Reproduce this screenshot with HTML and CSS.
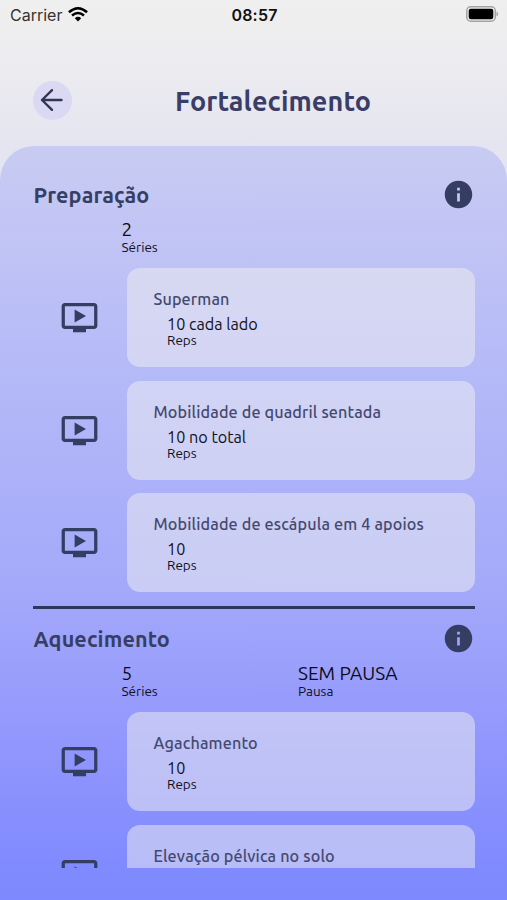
FILE: index.html
```
<!DOCTYPE html>
<html lang="pt-BR">
<head>
  <meta charset="UTF-8" />
  <meta name="viewport" content="width=device-width, initial-scale=1.0" />
  <title>Fortalecimento</title>
  <link rel="stylesheet" href="styles.css">
</head>
<body>
  <svg class="symbols">
    <symbol id="video" viewBox="0 0 24 24">
      <path d="M21 3H3c-1.11 0-2 .89-2 2v12c0 1.1.89 2 2 2h5v2h8v-2h5c1.1 0 2-.9 2-2V5c0-1.11-.9-2-2-2zm0 14H3V5h18v12zm-5-6l-7 4V7z"/>
    </symbol>
    <symbol id="info" viewBox="0 0 24 24">
      <path d="M12 2C6.48 2 2 6.48 2 12s4.48 10 10 10 10-4.48 10-10S17.52 2 12 2zm1 15h-2v-6h2v6zm0-8h-2V7h2v2z"/>
    </symbol>
  </svg>

  <div class="status">
    <div class="carrier">
      <span>Carrier</span>
      <svg class="wifi" viewBox="0 0 20 15">
        <path d="M.9 5.3Q10-2.700 19.100 5.300M4 8.500Q10 3.400 16 8.500" fill="none" stroke="#000" stroke-width="2.500"/>
        <path d="M6.800 11.200Q10 8.400 13.200 11.200L10 14.500z"/>
      </svg>
    </div>
    <div class="clock">08:57</div>
    <svg class="battery" viewBox="0 0 33 16">
      <rect x=".75" y=".75" width="28.500" height="14.500" rx="4" fill="none" stroke="#a3a3a3" stroke-width="1.500"/>
      <rect x="2.700" y="2.700" width="24.600" height="10.600" rx="2.200"/>
      <path d="M30.500 5.500c2.200.8 2.200 4.200 0 5z" fill="#a3a3a3"/>
    </svg>
  </div>

  <div class="header">
    <button class="back" aria-label="Voltar">
      <svg viewBox="0 0 24 24"><path d="M21.500 12H2M12 2.200L2 12l10 9.800"/></svg>
    </button>
    <h1>Fortalecimento</h1>
  </div>

  <div class="panel">
    <div class="scroll">
      <section class="block">
        <div class="block-title">
          <h2>Preparação</h2>
          <svg class="info"><use href="#info"/></svg>
        </div>
        <div class="stats">
          <div><p class="value">2</p><p class="label">Séries</p></div>
        </div>
        <div class="exercise">
          <svg class="video"><use href="#video"/></svg>
          <div class="card">
            <h3>Superman</h3>
            <p class="reps">10 cada lado</p>
            <p class="label">Reps</p>
          </div>
        </div>
        <div class="exercise">
          <svg class="video"><use href="#video"/></svg>
          <div class="card">
            <h3>Mobilidade de quadril sentada</h3>
            <p class="reps">10 no total</p>
            <p class="label">Reps</p>
          </div>
        </div>
        <div class="exercise">
          <svg class="video"><use href="#video"/></svg>
          <div class="card">
            <h3>Mobilidade de escápula em 4 apoios</h3>
            <p class="reps">10</p>
            <p class="label">Reps</p>
          </div>
        </div>
      </section>

      <section class="block">
        <div class="block-title">
          <h2>Aquecimento</h2>
          <svg class="info"><use href="#info"/></svg>
        </div>
        <div class="stats">
          <div><p class="value">5</p><p class="label">Séries</p></div>
          <div><p class="value">SEM PAUSA</p><p class="label">Pausa</p></div>
        </div>
        <div class="exercise">
          <svg class="video"><use href="#video"/></svg>
          <div class="card">
            <h3>Agachamento</h3>
            <p class="reps">10</p>
            <p class="label">Reps</p>
          </div>
        </div>
        <div class="exercise">
          <svg class="video"><use href="#video"/></svg>
          <div class="card">
            <h3>Elevação pélvica no solo</h3>
          </div>
        </div>
      </section>
    </div>
  </div>
</body>
</html>
```
FILE: styles.css
```
* {
  box-sizing: border-box;
}
body {
  margin: 0;
  height: 900px;
  overflow: hidden;
  display: flex;
  flex-direction: column;
  font-family: "Ubuntu", "Noto Sans", sans-serif;
  color: #10101c;
  background: linear-gradient(#efefef 0, #efeeef 30px, #e5e5f1 146px);
}
h1, h2, h3, p {
  margin: 0;
  white-space: nowrap;
}
.symbols {
  display: none;
}
.status {
  height: 30px;
  flex: none;
  display: grid;
  grid-template-columns: 1fr auto 1fr;
  align-items: center;
  padding: 0 8px 0 10px;
  font-family: Inter, sans-serif;
  font-size: 16px;
}
.carrier {
  display: flex;
  align-items: center;
  gap: 6px;
  color: #333;
}
.wifi {
  width: 20px;
  height: 15px;
  margin-bottom: 2px;
}
.clock {
  font-weight: 600;
  letter-spacing: 0.2px;
  color: #111;
}
.battery {
  width: 33px;
  height: 16px;
  justify-self: end;
  margin-bottom: 2px;
}
.header {
  height: 116px;
  flex: none;
  display: flex;
  align-items: center;
  padding: 24px 33px 0;
}
.back {
  width: 39px;
  height: 39px;
  flex: none;
  padding: 0;
  border: 0;
  border-radius: 50%;
  background: #dbd8f3;
  display: flex;
  align-items: center;
  justify-content: center;
}
.back svg {
  width: 24px;
  height: 24px;
  margin: 0 1px 1px 0;
  fill: none;
  stroke: #323655;
  stroke-width: 2.4;
  stroke-linecap: round;
  stroke-linejoin: round;
}
h1 {
  flex: 1;
  padding-top: 1px;
  text-align: center;
  font-size: 27px;
  line-height: 32px;
  letter-spacing: 0.1px;
  font-weight: 700;
  color: #3a3e66;
}
.panel {
  flex: 1;
  min-height: 0;
  padding: 0 32.5px 32.5px 33px;
  border-radius: 34px 34px 0 0;
  background: linear-gradient(#c8ccf2 0, #c2c5f4 80px, #b4b9f8 235px, #a3a8fa 450px, #9196fd 600px, #818bff 715px, #7f89ff 100%);
}
.scroll {
  height: 100%;
  overflow: hidden;
  padding-top: 31px;
}
.block + .block {
  border-top: 3px solid #2e385d;
  margin-top: 13.5px;
  padding-top: 12px;
}
.block-title {
  height: 36px;
  display: flex;
  align-items: center;
  justify-content: space-between;
}
h2 {
  padding-left: 0.5px;
  font-size: 21.6px;
  letter-spacing: 0.1px;
  font-weight: 600;
  color: #373e63;
}
.info {
  width: 33px;
  height: 33px;
  margin-bottom: 1px;
  fill: #363d62;
}
.stats {
  height: 55px;
  display: grid;
  grid-template-columns: 176.5px 1fr;
  padding: 6px 0 0 88.5px;
}
.value {
  font-size: 19px;
  line-height: 20px;
  color: #0c0c18;
}
.label {
  font-size: 13.5px;
  line-height: 16px;
}
.exercise {
  display: flex;
  align-items: center;
}
.exercise + .exercise {
  margin-top: 13.3px;
}
.video {
  width: 39px;
  height: 39px;
  flex: none;
  margin: 0 27.5px 0 27px;
  fill: #343d62;
}
.card {
  flex: 1;
  height: 99.3px;
  padding: 20px 27px;
  border-radius: 13px;
  background: rgba(239, 239, 239, .5);
}
h3 {
  font-size: 16.2px;
  line-height: 22px;
  letter-spacing: 0.13px;
  font-weight: 500;
  color: #44496f;
}
.reps {
  font-size: 16.2px;
  line-height: 22px;
  margin-top: 3px;
}
.card .reps, .card .label {
  padding-left: 13.5px;
}
.card .label {
  line-height: 13px;
  margin-top: -1px;
}
```
